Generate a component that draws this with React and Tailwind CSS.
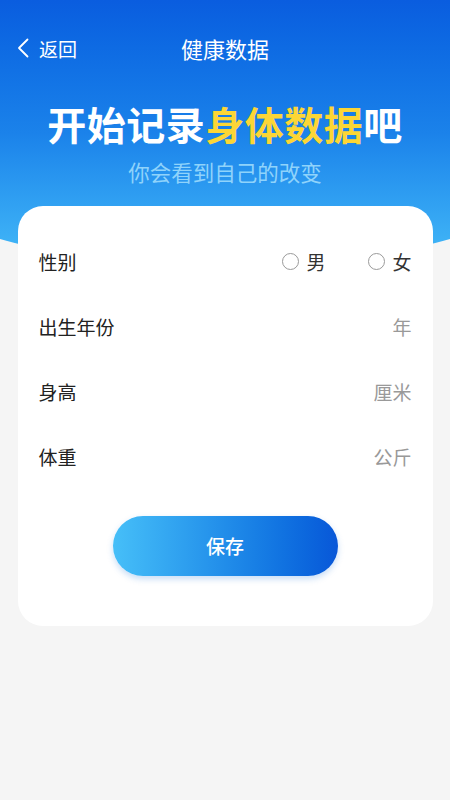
import React from "react";

const font = { fontFamily: '"Noto Sans CJK SC", "Noto Sans", sans-serif' };

function Radio({ label }) {
  return (
    <div className="flex items-center gap-[7px]">
      <span className="w-[17px] h-[17px] rounded-full border-[1.5px] border-[#9a9a9a] box-border" />
      <span className="text-[19px] text-[#333] leading-none">{label}</span>
    </div>
  );
}

function Row({ label, right }) {
  return (
    <div className="h-[65px] flex items-center justify-between">
      <span className="text-[19px] text-[#222] leading-none">{label}</span>
      {right}
    </div>
  );
}

export default function App() {
  return (
    <div className="relative min-h-[800px] w-[450px] bg-[#f5f5f5] overflow-hidden" style={font}>
      <div className="absolute top-0 left-[-75px] w-[600px] h-[266px] bg-gradient-to-b from-[#0a5ddf] via-[#1b82ea] to-[#45bbf8] rounded-b-[300px_80px]" />
      <div className="relative">
        <div className="mt-[26px] h-[44px] grid grid-cols-[1fr_auto_1fr] items-center">
          <div className="flex items-center pl-[17px] gap-[10px] text-white">
            <svg width="12" height="20" viewBox="0 0 12 20" fill="none">
              <polyline points="10.5,1.5 2,10 10.5,18.5" stroke="white" strokeWidth="1.8" strokeLinecap="round" strokeLinejoin="round" />
            </svg>
            <span className="text-[19px] leading-none">返回</span>
          </div>
          <div className="text-white text-[22px] leading-none">健康数据</div>
          <div />
        </div>
        <div className="mt-[29px] text-center text-[39px] font-bold leading-[48px] text-white tracking-[0.5px]">
          开始记录<span className="text-[#fcd635]">身体数据</span>吧
        </div>
        <div className="mt-[10px] text-center text-[21.5px] leading-[30px] text-[#8fd3fb]">
          你会看到自己的改变
        </div>
        <div className="mt-[19px] mx-auto w-[415px] bg-white rounded-[25px] px-[21px] pt-[23px] pb-[50px]">
          <Row
            label="性别"
            right={
              <div className="flex items-center gap-[43px]">
                <Radio label="男" />
                <Radio label="女" />
              </div>
            }
          />
          <Row label="出生年份" right={<span className="text-[19px] text-[#999] leading-none">年</span>} />
          <Row label="身高" right={<span className="text-[19px] text-[#999] leading-none">厘米</span>} />
          <Row label="体重" right={<span className="text-[19px] text-[#999] leading-none">公斤</span>} />
          <div className="mt-[27px] flex justify-center">
            <button className="w-[225px] h-[60px] rounded-full bg-gradient-to-r from-[#46bff8] to-[#0957d8] text-white text-[19px] font-medium shadow-[0_3px_6px_rgba(30,120,220,0.25)]">
              保存
            </button>
          </div>
        </div>
      </div>
    </div>
  );
}
